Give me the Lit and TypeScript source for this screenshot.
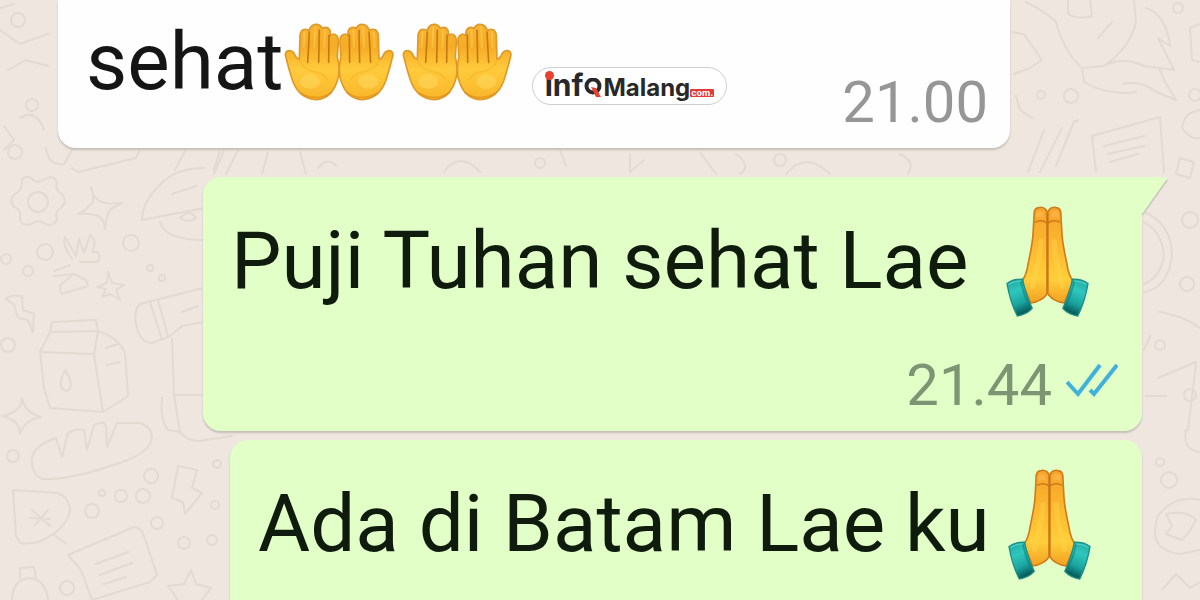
import { LitElement, html, svg, css } from "lit";
import { customElement, property } from "lit/decorators.js";

@customElement("praying-hands")
class PrayingHands extends LitElement {
  static styles = css`
    :host { display: block; flex: none; }
    svg { display: block; width: 87px; height: 113px; }
  `;
  render() {
    return html`<svg viewBox="45 40 260 340" role="img" aria-label="folded hands">
      <defs>
        <linearGradient id="skin" x1="0" y1="0" x2="0" y2="1">
          <stop offset="0" stop-color="#f5a32c" />
          <stop offset="0.35" stop-color="#fbb52d" />
          <stop offset="0.75" stop-color="#ffce3a" />
          <stop offset="1" stop-color="#f3a022" />
        </linearGradient>
        <linearGradient id="cuff" x1="0" y1="0" x2="0.3" y2="1">
          <stop offset="0" stop-color="#1fa79f" />
          <stop offset="0.4" stop-color="#2fc6be" />
          <stop offset="0.75" stop-color="#1aa39f" />
          <stop offset="1" stop-color="#08605f" />
        </linearGradient>
        <g id="half">
          <path d="M175 64 C170 48 160 46 151 47 C139 48 135 54 135 66 L132 118 C131 160 119 200 114 232 C110 250 105 260 98 270 L124 335 C146 333 168 320 175 304 Z"
            fill="url(#skin)" stroke="#d07c1a" stroke-width="5" stroke-linejoin="round" />
          <path d="M138 92 Q155 82 175 94" fill="none" stroke="#d07718" stroke-width="5" />
          <path d="M142 62 Q152 52 163 62 L164 78 Q150 74 141 80 Z" fill="#ffb84a" opacity="0.7" />
          <path d="M155 150 C154 195 140 240 130 285" fill="none" stroke="#ffd94f" stroke-width="16" stroke-linecap="round" opacity="0.35" />
          <path d="M53 276 Q72 262 100 263 Q108 306 129 351 Q112 370 84 374 Q62 330 53 276 Z"
            fill="url(#cuff)" stroke="#1b8f87" stroke-width="4" stroke-linejoin="round" />
          <path d="M94 268 Q103 310 122 350" fill="none" stroke="#0c7f7c" stroke-width="5" opacity="0.6" />
          <path d="M58 279 Q76 268 95 269" fill="none" stroke="#5ad9cd" stroke-width="4" opacity="0.7" />
        </g>
      </defs>
      <use href="#half" />
      <use href="#half" transform="translate(350 0) scale(-1 1)" />
      <path d="M175 66 L175 302" stroke="#c8741a" stroke-width="6" stroke-linecap="round" />
    </svg>`;
  }
}

@customElement("open-hands")
class OpenHands extends LitElement {
  static styles = css`
    :host { display: block; flex: none; }
    svg { display: block; width: 112px; height: 80px; }
  `;
  render() {
    return html`<svg viewBox="25 35 336 240" role="img" aria-label="palms up together">
      <defs>
        <linearGradient id="palm" x1="0" y1="0" x2="0" y2="1">
          <stop offset="0" stop-color="#f7b432" />
          <stop offset="0.3" stop-color="#f6ac25" />
          <stop offset="0.6" stop-color="#ffcb3c" />
          <stop offset="1" stop-color="#f9b529" />
        </linearGradient>
        <g id="hand">
          <path d="M74 146 L76 76 Q78 58 90 57 Q99 56 103 62 Q108 42 125 42 Q138 42 142 54 Q158 46 166 60 L168 76 Q176 66 186 76 Q194 84 190 110 L188 140 Q196 170 191 200 Q176 264 125 268 Q74 266 54 212 Q42 176 32 134 Q32 120 46 121 Q57 123 62 137 Q67 146 74 146 Z"
            fill="url(#palm)" stroke="#e09a2c" stroke-width="5" stroke-linejoin="round" />
          <path d="M104 66 L99 156 M134 60 L132 156 M163 74 L162 156" fill="none" stroke="#c77a14" stroke-width="5" stroke-linecap="round" />
          <path d="M90 66 L87 110 M122 50 L119 110 M151 60 L149 110" fill="none" stroke="#ffca55" stroke-width="6" stroke-linecap="round" opacity="0.6" />
          <ellipse cx="106" cy="214" rx="30" ry="22" fill="#ffdb63" opacity="0.5" />
          <path d="M74 150 Q84 176 118 184 Q146 186 160 210" fill="none" stroke="#f0a928" stroke-width="5" opacity="0.4" />
          <path d="M78 248 Q125 276 172 246" fill="none" stroke="#d98816" stroke-width="5" opacity="0.6" />
        </g>
      </defs>
      <use href="#hand" />
      <use href="#hand" transform="translate(387 0) scale(-1 1)" />
    </svg>`;
  }
}

const dots: number[][] = [
  [38, 202, 10], [45, 252, 8], [6, 259, 5], [28, 271, 5], [131, 243, 8], [8, 345, 7], [13, 456, 6],
  [151, 476, 7], [143, 496, 7], [121, 496, 6], [92, 511, 7], [102, 493, 3], [157, 523, 6], [184, 543, 6],
  [212, 540, 5], [67, 588, 7], [217, 464, 4], [215, 505, 4], [15, 152, 7], [150, 268, 3], [162, 278, 3],
  [1041, 95, 4], [1071, 96, 7], [1178, 8, 5], [1187, 284, 7], [1190, 220, 8], [1169, 480, 8], [1195, 95, 6],
  [1160, 462, 4], [18, 20, 7], [32, 105, 6], [1160, 345, 5], [1190, 395, 6], [540, 163, 5], [780, 160, 6],
];

@customElement("chat-wallpaper")
class ChatWallpaper extends LitElement {
  static styles = css`
    :host { display: block; position: absolute; inset: 0; }
    svg { display: block; width: 100%; height: 100%; }
    .lines { fill: none; stroke: #e3dad2; stroke-width: 2; stroke-linejoin: round; stroke-linecap: round; }
  `;
  render() {
    return html`<svg viewBox="0 0 1200 600" preserveAspectRatio="xMidYMin slice" aria-hidden="true">
      <g class="lines">
        ${dots.map(([x, y, r]) => svg`<circle cx=${x} cy=${y} r=${r} />`)}
        <path d="M22 179 Q28 174 33 180 Q38 184 45 179 Q54 174 57 183 Q54 190 62 194 Q68 202 61 208 Q54 212 57 220 Q52 228 44 223 Q38 219 31 224 Q20 227 20 217 Q22 210 14 207 Q8 200 15 194 Q23 190 22 179 Z" />
        <path d="M91 187 Q96 202 90 205 Q84 212 78 214 Q90 213 99 216 Q105 221 105 229 Q106 213 112 208 L122 203 Q104 205 98 200 Q92 196 91 187 Z" />
        <path d="M65 237 L76 256 L79 239 L84 253 L90 235 Q98 240 92 252 Q102 250 98 262 L80 262 M65 237 Q62 245 72 259 M54 271 L70 265 M54 276 L74 274 L86 280 L88 286 L61 294 L60 285 L72 276" />
        <path d="M108 272 L112 283 L124 285 L116 290 L120 300 L110 294 L102 297 L106 289 L97 287 L107 283 Z" />
        <path d="M6 299 Q10 294 22 296 L23 310 L34 314 L33 332 L28 320 L18 318 L14 305 Z" />
        <path d="M52 322 L96 320 L98 331 L50 332 Z M50 332 L40 352 L44 388 L50 408 L103 412 L128 396 L125 352 Q116 336 98 331 L94 354 L103 412 M40 352 L94 354 M65 370 Q56 388 66 391 Q76 388 65 370 M106 348 L118 344 M106 365 L120 362" />
        <path d="M22 398 Q22 412 2 416 Q20 420 20 434 Q24 420 41 417 Q24 412 22 398 Z" />
        <path d="M32 462 Q30 447 56 438 L62 457 L68 433 Q76 428 84 430 L87 450 L94 425 Q104 420 106 426 L107 447 L117 423 L140 423 Q152 427 152 438 Q150 455 110 466 Q70 480 42 479 Q32 474 32 462 Z" />
        <path d="M13 490 L58 493 Q70 498 70 511 Q66 526 53 534 L66 544 L53 534 Q38 546 20 543 L16 536 Z M32 510 L50 526 M34 526 L48 510 M30 518 L50 519" />
        <path d="M68 555 L134 527 Q142 528 144 536 L157 575 L150 582 L92 600 L81 570 Z M96 564 L128 552 M100 575 L132 563 M104 584 L126 577" />
        <path d="M178 466 L197 470 L192 488 L202 493 L185 514 L183 502 L172 498 Z" />
        <path d="M191 570 L196 584 L211 588 L202 600 M191 570 L184 584 L168 586 L178 600" />
        <path d="M12 600 Q12 580 30 578 Q46 580 48 600 M20 578 L20 568 L34 567 L36 578" />
        <path d="M142 220 Q142 200 165 180 Q180 168 204 168 M142 220 L204 208 M160 222 Q165 240 204 240 M172 194 L196 186 M180 218 Q190 208 196 218 Q188 224 180 218" />
        <path d="M140 304 L203 288 M140 304 Q132 312 138 332 Q145 346 155 342 L170 336 L182 326 L203 322 M150 302 L162 340 M158 300 L168 336 M182 312 L198 306 M172 338 L174 395 L203 395 M162 398 Q160 420 168 430 L180 432 L174 395 M180 432 Q190 444 205 440 L232 436" />
        <path d="M46 148 Q48 166 64 164 L72 150 M72 168 L78 172 L136 158 L140 149 M175 170 L186 149 M214 170 L220 150" />
        <path d="M0 30 L20 44 L48 34 M8 70 L26 60 L48 66 M20 118 Q36 108 44 130 M0 8 L14 4 M4 126 L14 140 L4 150" />
        <path d="M214 174 L224 150 M226 174 L238 150 M262 174 L268 152 M300 152 L306 174 M318 168 Q328 156 336 166 M444 172 Q460 150 480 172 M560 150 L566 166 M630 154 L630 172 L644 160 M700 152 L716 174 M736 154 Q752 166 740 174 M786 174 Q806 150 830 174 M900 154 Q916 162 908 174" />
        <path d="M1012 32 L1024 34 L1042 60 L1030 68 L1014 74 M1026 2 Q1046 12 1056 22 Q1064 52 1082 68 L1104 66 Q1130 48 1136 22 L1134 0 M1068 0 L1068 14 Q1078 20 1092 16 L1090 0 M1098 38 L1112 22 M1104 66 Q1122 56 1144 66 L1174 70 L1158 38 L1170 46 Q1166 14 1146 8 M1082 68 L1084 82 Q1108 96 1136 92 M1124 84 Q1142 80 1156 92 L1176 100 L1164 80 L1160 70" />
        <path d="M1016 96 L1020 110 L1032 118 M1028 172 L1044 130 M1040 172 L1062 128 M1056 166 L1074 122 L1078 120 M1092 136 L1160 117 L1164 172 M1092 136 L1096 172 M1104 146 L1144 136 M1108 154 L1144 146 M1110 162 L1138 154" />
        <path d="M1200 110 Q1184 112 1182 128 Q1190 140 1200 138 M1180 158 L1194 162 L1190 178 L1176 174 Z M1200 24 L1190 28 L1192 60 L1200 62" />
        <path d="M1144 212 Q1172 224 1172 256 Q1168 288 1144 292 M1144 222 Q1162 232 1164 256 Q1160 278 1144 284 M1160 312 Q1184 316 1200 328 M1158 378 L1196 362 M1188 430 L1196 364 M1146 396 L1166 396 M1150 336 L1144 350" />
        <path d="M1200 500 Q1174 494 1158 516 Q1146 550 1180 554 L1200 550 M1166 514 Q1188 510 1196 520 Q1190 532 1182 540 L1166 534 L1172 526 Z M1162 590 L1176 574 L1190 588 L1200 582 M1186 430 Q1182 450 1200 452" />
      </g>
    </svg>`;
  }
}

@customElement("brand-badge")
class BrandBadge extends LitElement {
  static styles = css`
    :host { display: flex; box-sizing: border-box; align-items: center; justify-content: center;
      width: 195px; height: 38px; border: 1px solid #cfcfcf; border-radius: 19px; background: #fff;
      font-family: Inter, "Open Sans", sans-serif; font-weight: 700; color: #2a2729; }
    .logo { display: flex; align-items: baseline; }
    .info { position: relative; font-size: 30px; line-height: 32px; }
    .dot { position: absolute; left: 0; top: 2px; width: 9px; height: 9px; border-radius: 50%; background: #e8412f; }
    .ring { width: 20px; height: 19px; margin-bottom: -2px; align-self: center; }
    .name { font-size: 24px; line-height: 32px; }
    .tld { padding: 0 1px; background: #e23b38; color: #fff; font-size: 9px; line-height: 8px; border-radius: 1px; }
  `;
  render() {
    return html`<div class="logo">
      <span class="info">inf<span class="dot"></span></span>
      <svg class="ring" viewBox="0 0 20 19" aria-hidden="true">
        <circle cx="10" cy="8" r="6.5" fill="none" stroke="#2a2729" stroke-width="4" />
        <path d="M8 9 L13 10 L18 19 L13 19 Z" fill="#e8412f" />
      </svg>
      <span class="name">Malang</span><span class="tld">com.</span>
    </div>`;
  }
}

@customElement("chat-bubble")
class ChatBubble extends LitElement {
  @property() text = "";
  @property() time = "";
  @property({ type: Boolean, reflect: true }) own = false;
  @property({ type: Boolean }) tail = false;
  static styles = css`
    :host { display: block; position: relative; color: #151515; }
    .bubble { display: flex; flex-direction: column; padding: 36px 24px 14px 28px; border-radius: 18px;
      background: #e1ffc7; box-shadow: 0 2px 2px #c4bfb8; }
    .line { display: flex; align-items: center; height: 96px; font-size: 80px; line-height: 96px; white-space: pre; }
    .meta { display: flex; justify-content: flex-end; align-items: center; gap: 14px; min-height: 64px;
      margin-top: 44px; font-size: 58px; line-height: 64px; color: #7e9573; }
    .ticks { width: 52px; height: 36px; margin-bottom: 10px; }
    .tail { position: absolute; left: 100%; top: 0; margin-left: -20px; width: 46px; height: 38px; }
    .bubble.received { flex-direction: row; justify-content: space-between; align-items: flex-end;
      padding: 14px 22px 14px 28px; border-radius: 0 0 18px 18px; background: #fefefe; }
    .received .line { margin-bottom: 24px; }
    .received .meta { margin-top: 0; color: #969696; }
    :host([own]) { color: #0e1b0d; }
  `;
  render() {
    return html`<div class="bubble ${this.own ? "" : "received"}">
        <div class="line"><span>${this.text}</span><slot></slot></div>
        <div class="meta">
          ${this.time ? html`<time>${this.time}</time>` : ""}
          ${this.time && this.own
            ? html`<svg class="ticks" viewBox="0 0 52 36" role="img" aria-label="Read">
                <path d="M1 20 L12 32 L34 3 M24 28 L28 32 L51 3" fill="none" stroke="#41b1dc" stroke-width="4" />
              </svg>`
            : ""}
        </div>
      </div>
      ${this.tail
        ? html`<svg class="tail" viewBox="0 0 46 38" aria-hidden="true">
            <path d="M20 38 L45 3" stroke="#cbc8bd" stroke-width="2" />
            <path d="M0 0 H43 Q46 0 44 3 L20 37 H0 Z" fill="#e1ffc7" />
          </svg>`
        : ""}`;
  }
}

@customElement("app-root")
class AppRoot extends LitElement {
  static styles = css`
    :host { display: block; position: relative; height: 100vh; overflow: hidden; background: #eee6df;
      font-family: Roboto, sans-serif; }
    .chat { position: relative; display: flex; flex-direction: column; padding: 0 58px; }
    .first { margin-right: 132px; }
    .second { margin: 29px 0 0 145px; }
    .third { margin: 9px 0 0 172px; }
    .palms { margin-right: 6px; }
    .pray { margin-left: 16px; }
    .badge { position: absolute; left: calc(50% - 68px); top: 67px; }
  `;
  render() {
    return html`
      <chat-wallpaper></chat-wallpaper>
      <main class="chat">
        <chat-bubble class="first" text="sehat" time="21.00"
          ><open-hands class="palms"></open-hands><open-hands class="palms"></open-hands
        ></chat-bubble>
        <chat-bubble class="second" own tail text="Puji Tuhan sehat Lae " time="21.44">
          <praying-hands class="pray"></praying-hands>
        </chat-bubble>
        <chat-bubble class="third" own text="Ada di Batam Lae ku">
          <praying-hands class="pray"></praying-hands>
        </chat-bubble>
      </main>
      <brand-badge class="badge"></brand-badge>
    `;
  }
}
